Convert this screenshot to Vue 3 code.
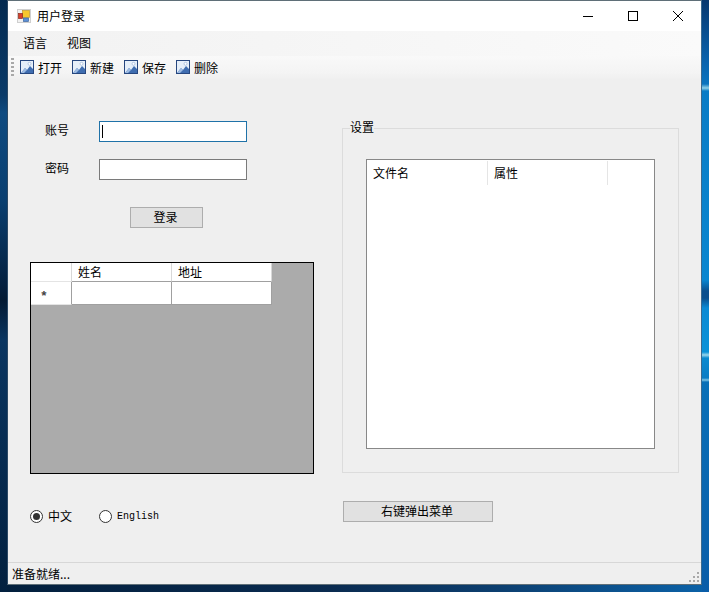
<template>
  <div class="window">
    <header class="titlebar">
      <svg class="app-icon" width="14" height="14" viewBox="0 0 14 14">
        <rect x="0.5" y="0.5" width="13" height="13" fill="#f1f1f1" stroke="#cfcfcf" />
        <rect x="5.5" y="1.5" width="7" height="7" fill="#f6c62e" stroke="#c09a30" stroke-width="0.7" />
        <rect x="1.5" y="4.5" width="4" height="5" fill="#d8402c" stroke="#8e2a1c" stroke-width="0.7" />
        <rect x="6.5" y="9" width="5" height="3.5" fill="#5b8fd6" stroke="#3d659e" stroke-width="0.7" />
      </svg>
      <span class="title">用户登录</span>
      <div class="caption-btns">
        <svg width="12" height="12" viewBox="0 0 12 12"><path d="M1 6.5h10" stroke="#000" fill="none" /></svg>
        <svg width="12" height="12" viewBox="0 0 12 12"><rect x="1.5" y="1.5" width="9" height="9" stroke="#000" fill="none" /></svg>
        <svg width="12" height="12" viewBox="0 0 12 12"><path d="M1 1l10 10M11 1L1 11" stroke="#000" fill="none" /></svg>
      </div>
    </header>

    <nav class="menubar">
      <span v-for="m in menus" :key="m" class="menu-item">{{ m }}</span>
    </nav>

    <div class="toolbar">
      <span class="grip"></span>
      <span v-for="t in tools" :key="t" class="tool">
        <svg width="16" height="16" viewBox="0 0 16 16">
          <rect x="1.5" y="1.5" width="13" height="13" fill="#e6eff9" stroke="#27477f" />
          <path d="M2 14l4-5 2 2 3-4 3 3v4z" fill="#3f6db0" />
          <path d="M2 14l4-5 2 2-3 3z" fill="#9dbbe2" />
          <circle cx="10.5" cy="4.8" r="1.5" fill="#fff" stroke="#7d9ccb" stroke-width="0.5" />
        </svg>
        {{ t }}
      </span>
    </div>

    <main class="content">
      <section class="left">
        <div class="field">
          <label>账号</label>
          <div class="input input--focus"><span class="caret"></span></div>
        </div>
        <div class="field field--second">
          <label>密码</label>
          <div class="input"></div>
        </div>
        <button class="btn btn--login">登录</button>

        <div class="grid-view">
          <div class="grid-row grid-row--head">
            <div class="cell cell--side"></div>
            <div class="cell">姓名</div>
            <div class="cell">地址</div>
          </div>
          <div class="grid-row grid-row--new">
            <div class="cell cell--side"><span class="star">*</span></div>
            <div class="cell cell--data"></div>
            <div class="cell cell--data"></div>
          </div>
        </div>

        <div class="radios">
          <span class="radio"><span class="dot dot--on"></span><span class="cjk">中文</span></span>
          <span class="radio"><span class="dot"></span><span class="latin">English</span></span>
        </div>
      </section>

      <section class="right">
        <fieldset class="group">
          <legend>设置</legend>
          <div class="list-view">
            <div class="list-head">
              <span class="col">文件名</span>
              <span class="col">属性</span>
            </div>
          </div>
        </fieldset>
        <button class="btn btn--popup">右键弹出菜单</button>
      </section>
    </main>

    <footer class="statusbar">
      <span>准备就绪...</span>
      <svg class="sizer" width="12" height="12" viewBox="0 0 12 12" fill="#a8a8a8">
        <rect x="8" y="0" width="2" height="2" />
        <rect x="4" y="4" width="2" height="2" />
        <rect x="8" y="4" width="2" height="2" />
        <rect x="0" y="8" width="2" height="2" />
        <rect x="4" y="8" width="2" height="2" />
        <rect x="8" y="8" width="2" height="2" />
      </svg>
    </footer>
  </div>
</template>

<script setup>
const menus = ['语言', '视图']
const tools = ['打开', '新建', '保存', '删除']
</script>

<style>
html, body {
  height: 592px;
  overflow: hidden;
}
body {
  background-color: #0a2b50;
  background-image:
    linear-gradient(180deg, #07386f 0, #0a62ac 60px, #0a74bf 84px, #8fd0e8 88px, #0a7cc6 91px, #0a86d0 280px, #0b4f8e 291px, #0b4f8e 298px, #0b8ad4 308px, #0b92d8 352px, #9ad6ea 355px, #0b8ad0 358px, #0b7cc4 378px, #7fc4e4 380px, #0a70b8 382px, #0a5da8 592px),
    linear-gradient(180deg, #042a50 0, #0a3a68 95px, #0e4a80 113px, #0a3f70 200px, #04203f 285px, #041a33 300px, #0a3560 340px, #02203f 592px),
    linear-gradient(90deg, #021f3d 0, #0a2b50 330px, #0c3f70 500px, #0b62a8 709px);
  background-repeat: no-repeat;
  background-size: 7px 592px, 7px 592px, 709px 7px;
  background-position: right top, left top, left bottom;
}
</style>

<style scoped>
.window {
  position: absolute;
  left: 7px;
  top: 0;
  width: 695px;
  height: 585px;
  box-sizing: border-box;
  display: flex;
  flex-direction: column;
  background: #efefef;
  border: 1px solid #5f6f78;
  border-left-color: #2d4a66;
  border-right-color: #3b6a8f;
  font-family: "Noto Sans CJK SC", "Liberation Sans", sans-serif;
  font-size: 12px;
  color: #000;
}

.titlebar {
  display: flex;
  align-items: center;
  height: 30px;
  flex-shrink: 0;
  padding-left: 9px;
  background: #fff;
}
.app-icon {
  margin-right: 6px;
  margin-top: -1px;
}
.title {
  margin-top: -1px;
}
.caption-btns {
  margin-left: auto;
  display: flex;
  gap: 33px;
  padding-right: 17px;
  margin-top: -1px;
}
.caption-btns svg {
  display: block;
}

.menubar {
  display: flex;
  height: 25px;
  flex-shrink: 0;
  align-items: center;
  gap: 20px;
  padding-left: 15px;
  padding-bottom: 2px;
  box-sizing: border-box;
  background: linear-gradient(90deg, #f2f2f2 0, #fafafa 100%);
}

.toolbar {
  display: flex;
  align-items: center;
  height: 24px;
  flex-shrink: 0;
  padding-left: 3px;
  padding-bottom: 2px;
  box-sizing: border-box;
  background: linear-gradient(180deg, #f9f9f9 0, #f4f4f4 70%, #efefef 100%);
}
.grip {
  width: 3px;
  height: 18px;
  margin-right: 5px;
  background: repeating-linear-gradient(180deg, #a9a9a9 0, #a9a9a9 2px, transparent 2px, transparent 4px);
}
.tool {
  display: flex;
  align-items: center;
  gap: 3px;
  margin-right: 9px;
}

.content {
  flex: 1;
  display: flex;
  min-height: 0;
}
.left {
  width: 334px;
  flex-shrink: 0;
  padding: 41px 0 0 22px;
  box-sizing: border-box;
}
.field {
  display: flex;
  align-items: center;
  height: 21px;
}
.field--second {
  margin-top: 17px;
}
.field label {
  width: 69px;
  padding-left: 15px;
  box-sizing: border-box;
  margin-top: -4px;
}
.input {
  width: 148px;
  height: 21px;
  box-sizing: border-box;
  background: #fff;
  border: 1px solid #7a7a7a;
  display: flex;
  align-items: center;
  padding-left: 2px;
}
.input--focus {
  border-color: #1f72a8;
}
.caret {
  width: 1px;
  height: 13px;
  background: #000;
}

.btn {
  display: block;
  box-sizing: border-box;
  height: 21px;
  padding: 0 0 2px;
  background: #e1e1e1;
  border: 1px solid #adadad;
  font: inherit;
  color: #000;
}
.btn--login {
  width: 73px;
  margin: 27px 0 0 100px;
  padding-right: 2px;
}

.grid-view {
  width: 284px;
  height: 212px;
  box-sizing: border-box;
  margin-top: 34px;
  background: #ababab;
  border: 1px solid #000;
}
.grid-row {
  display: grid;
  grid-template-columns: 41px 100px 100px;
  width: 241px;
}
.grid-row--head {
  height: 19px;
}
.grid-row--new {
  height: 23px;
}
.cell {
  box-sizing: border-box;
  background: #fff;
  padding-left: 6px;
  line-height: 17px;
  border-right: 1px solid #a0a0a0;
  border-bottom: 1px solid #a0a0a0;
}
.cell--side {
  background: #fff;
  border-right: 1px solid #a0a0a0;
  border-bottom-color: #e4e4e4;
}
.grid-row--head .cell {
  border-right-color: #d8d8d8;
}
.star {
  display: block;
  margin: 8px 0 0 3px;
  font-family: "Liberation Mono", monospace;
  font-size: 13px;
  font-weight: 700;
  line-height: 13px;
  color: #444;
}

.radios {
  display: flex;
  gap: 27px;
  margin-top: 34px;
}
.radio {
  display: flex;
  align-items: center;
  gap: 5px;
  height: 16px;
}
.cjk {
  margin-top: -2px;
}
.dot {
  width: 13px;
  height: 13px;
  box-sizing: border-box;
  border: 1px solid #333;
  border-radius: 50%;
  background: #fff;
  display: flex;
  align-items: center;
  justify-content: center;
}
.dot--on::after {
  content: "";
  width: 7px;
  height: 7px;
  border-radius: 50%;
  background: #333;
}
.latin {
  font-family: "Liberation Mono", monospace;
  font-size: 10px;
}

.right {
  flex: 1;
  padding: 41px 0 0 0;
}
.group {
  width: 337px;
  height: 352px;
  box-sizing: border-box;
  margin: 0;
  padding: 0;
  border: 1px solid #dcdcdc;
  display: block;
}
.group legend {
  margin-left: 7px;
  padding: 0 0 2px;
  line-height: 12px;
  width: 24px;
}
.list-view {
  width: 289px;
  height: 290px;
  box-sizing: border-box;
  margin: 24px 0 0 23px;
  background: #fff;
  border: 1px solid #888;
}
.list-head {
  display: flex;
  height: 25px;
  padding-top: 1px;
  box-sizing: border-box;
}
.col {
  width: 120px;
  box-sizing: border-box;
  padding-left: 6px;
  line-height: 24px;
  border-right: 1px solid #e5e5e5;
}
.col:first-child {
  width: 121px;
}
.btn--popup {
  width: 150px;
  margin-top: 28px;
  margin-left: 1px;
  padding-right: 2px;
}

.statusbar {
  height: 22px;
  flex-shrink: 0;
  position: relative;
  display: flex;
  align-items: center;
  padding-left: 4px;
  border-top: 1px solid #d7d7d7;
  box-sizing: border-box;
}
.sizer {
  position: absolute;
  right: 0;
  bottom: 0;
}
</style>
